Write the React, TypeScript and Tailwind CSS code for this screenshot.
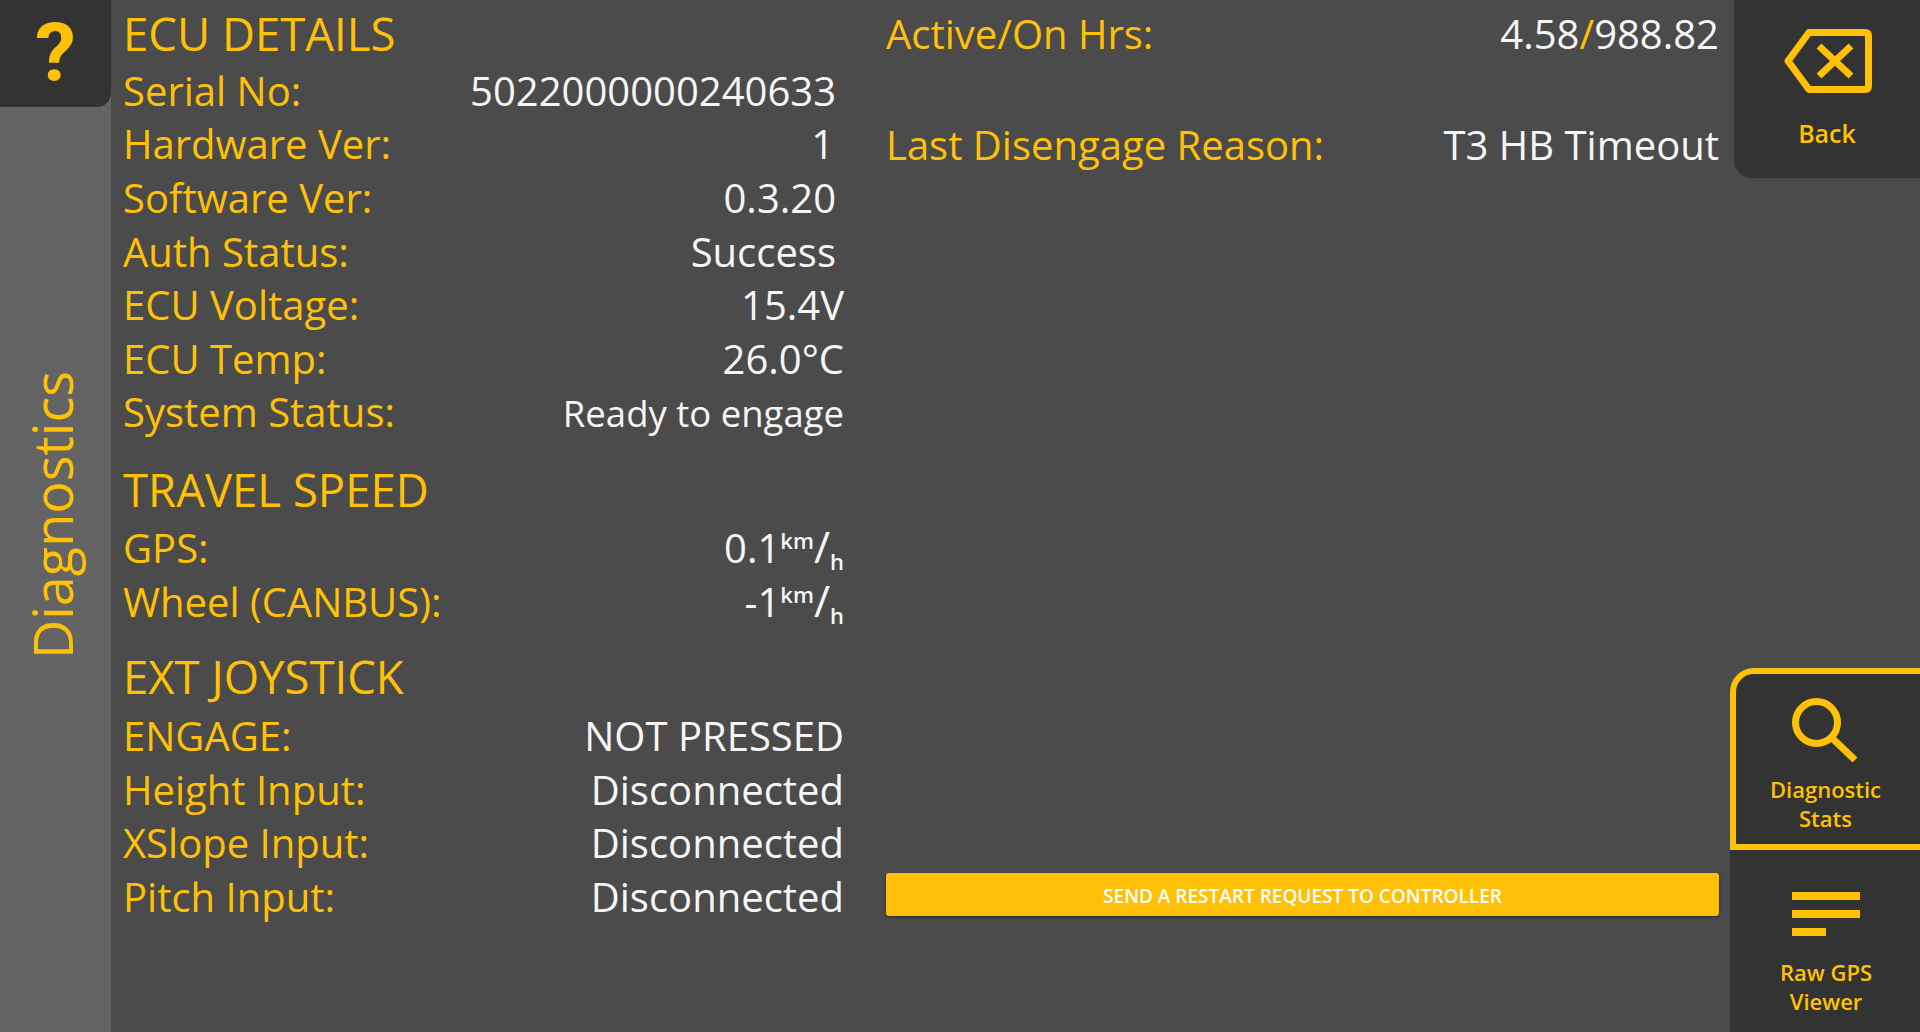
import React from 'react';

const font = 'font-["Open_Sans","Noto_Sans",sans-serif]';

const Row = ({ label, value, pr = 'pr-0' }: { label: string; value: React.ReactNode; pr?: string }) => (
  <div className="flex h-[53.600px] items-center justify-between pt-[6px] text-[40px] leading-none">
    <span className="text-[#ffc107]">{label}</span>
    <span className={`text-[#f5f5f5] ${pr}`}>{value}</span>
  </div>
);

const Heading = ({ children, className }: { children: React.ReactNode; className: string }) => (
  <div className={`flex items-center text-[45.500px] leading-none text-[#ffc107] ${className}`}>{children}</div>
);

const Speed = ({ value }: { value: string }) => (
  <span className="whitespace-nowrap">
    {value}
    <span className="align-[14px] text-[22px] font-semibold">km</span>
    <span className="text-[44px]">/</span>
    <span className="align-[-7px] text-[22px] font-semibold">h</span>
  </span>
);

const BackIcon = () => (
  <svg viewBox="0 0 88 64" className="ml-[2px] h-[64px] w-[88px]" fill="none" stroke="#ffc107" strokeWidth="7">
    <path d="M4 32 L25 3.5 H81 Q84.500 3.500 84.500 7 V57 Q84.500 60.500 81 60.500 H25 Z" strokeLinejoin="round" />
    <path d="M35 17 L67 47 M67 17 L35 47" />
  </svg>
);

const SearchIcon = () => (
  <svg viewBox="0 0 66 64" className="mr-[2px] h-[64px] w-[66px]" fill="none" stroke="#ffc107" strokeWidth="7">
    <circle cx="24.500" cy="24.500" r="21" />
    <path d="M40 40 L63 62" />
  </svg>
);

const LinesIcon = () => (
  <div className="flex w-[68px] flex-col gap-[10px]">
    <div className="h-[8px] w-[68px] bg-[#ffc107]" />
    <div className="h-[8px] w-[68px] bg-[#ffc107]" />
    <div className="h-[8px] w-[34px] bg-[#ffc107]" />
  </div>
);

export default function App() {
  return (
    <div className={`flex h-[1032px] w-[1920px] overflow-hidden bg-[#4b4b4b] ${font}`}>
      {/* left rail */}
      <div className="flex w-[111px] shrink-0 flex-col bg-[#646464]">
        <div className='flex h-[107px] items-center justify-center rounded-br-[14px] bg-[#333333] pb-[2px] font-["Roboto",sans-serif] text-[82px] font-bold leading-none text-[#ffc107]'>
          ?
        </div>
        <div className="flex flex-1 items-center justify-center pb-[110px] pr-[8px]">
          <span className="rotate-180 text-[54px] leading-none text-[#ffc107] [writing-mode:vertical-rl]">Diagnostics</span>
        </div>
      </div>

      {/* left data column */}
      <div className="w-[733px] shrink-0 pl-[12px] pt-[6px]">
        <Heading className="h-[55px]">ECU DETAILS</Heading>
        <Row label="Serial No:" value="5022000000240633" pr="pr-[8px]" />
        <Row label="Hardware Ver:" value="1" pr="pr-[10px]" />
        <Row label="Software Ver:" value="0.3.20" pr="pr-[8px]" />
        <Row label="Auth Status:" value="Success" pr="pr-[8px]" />
        <Row label="ECU Voltage:" value="15.4V" />
        <Row label="ECU Temp:" value="26.0°C" />
        <Row label="System Status:" value={<span className="text-[36.500px]">Ready to engage</span>} />
        <Heading className="h-[57px] mt-[25px]">TRAVEL SPEED</Heading>
        <Row label="GPS:" value={<Speed value="0.1" />} />
        <Row label="Wheel (CANBUS):" value={<Speed value="-1" />} />
        <Heading className="h-[59px] mt-[22px]">EXT JOYSTICK</Heading>
        <div className="flex flex-col">
          <Row label="ENGAGE:" value="NOT PRESSED" />
          <Row label="Height Input:" value="Disconnected" />
          <Row label="XSlope Input:" value="Disconnected" />
          <Row label="Pitch Input:" value="Disconnected" />
        </div>
      </div>

      {/* right data column */}
      <div className="flex flex-1 flex-col pl-[42px] pr-[11px] pt-[6px]">
        <div className="flex h-[55px] items-center justify-between text-[40px] leading-none">
          <span className="text-[#ffc107]">Active/On Hrs:</span>
          <span className="text-[#f5f5f5]">
            4.58<span className="text-[#ffc107]">/</span>988.82
          </span>
        </div>
        <div className="mt-[57px] flex h-[54px] items-center justify-between text-[40px] leading-none">
          <span className="text-[#ffc107]">Last Disengage Reason:</span>
          <span className="text-[#f5f5f5]">T3 HB Timeout</span>
        </div>
        <button className="mt-[701px] h-[43px] rounded-[3px] bg-[#ffc107] pt-[3px] text-[19px] font-semibold text-white shadow-[0_1px_3px_rgba(0,0,0,0.5)]">
          SEND A RESTART REQUEST TO CONTROLLER
        </button>
      </div>

      {/* right nav */}
      <div className="flex w-[190px] shrink-0 flex-col justify-between">
        <div className="ml-[4px] flex h-[178px] flex-col items-center rounded-bl-[18px] bg-[#333333] pt-[29px]">
          <BackIcon />
          <span className="mt-[28px] text-[25px] font-semibold leading-none text-[#ffc107]">Back</span>
        </div>
        <div className="flex flex-col">
          <div className="flex h-[182px] flex-col items-center rounded-tl-[24px] border-y-[6px] border-l-[6px] border-[#ffc107] bg-[#333333] pr-[5px] pt-[24px]">
            <SearchIcon />
            <span className="mt-[13px] text-center text-[22px] font-semibold leading-[29px] text-[#ffc107]">
              Diagnostic
              <br />
              Stats
            </span>
          </div>
          <div className="flex h-[182px] flex-col items-center bg-[#333333] pl-[2px] pt-[42px]">
            <LinesIcon />
            <span className="mt-[22px] text-center text-[22px] font-semibold leading-[29px] text-[#ffc107]">
              Raw GPS
              <br />
              Viewer
            </span>
          </div>
        </div>
      </div>
    </div>
  );
}
